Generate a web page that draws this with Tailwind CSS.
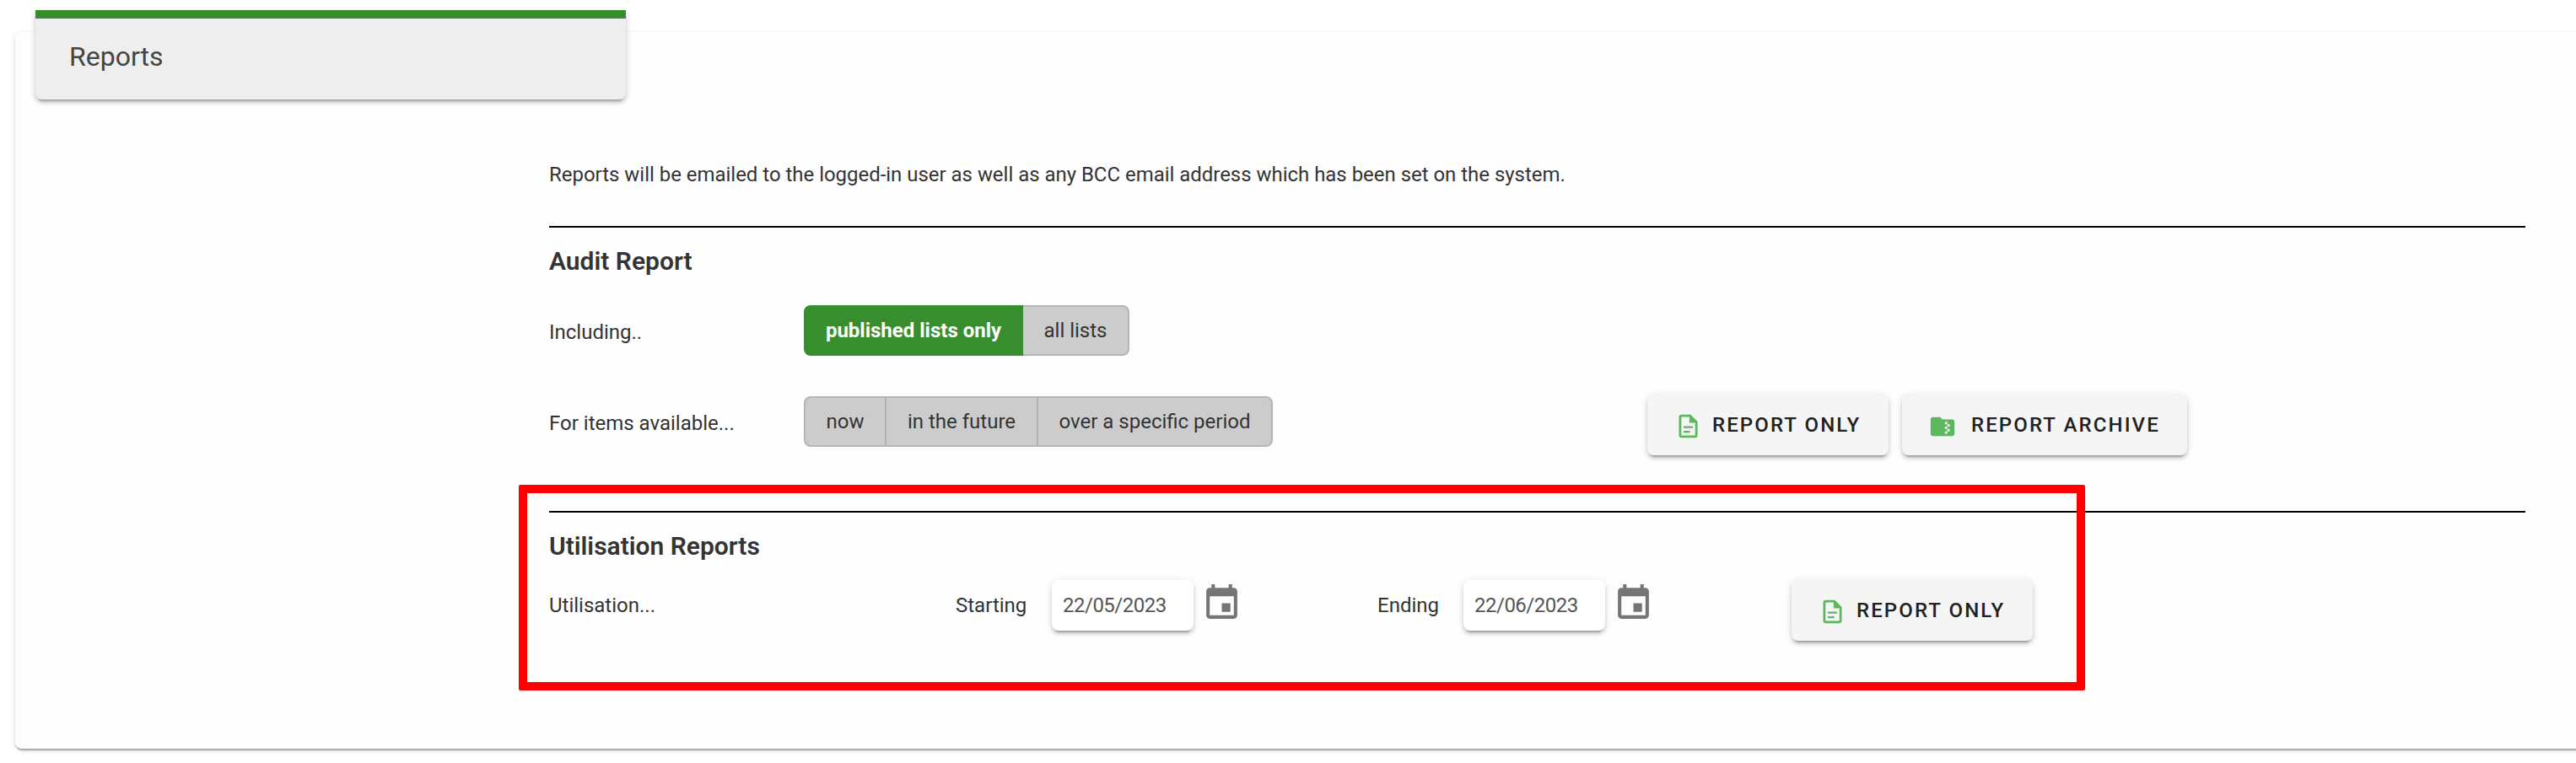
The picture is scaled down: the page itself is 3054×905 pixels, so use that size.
<!DOCTYPE html>
<html>
<head>
<meta charset="utf-8">
<script src="https://cdn.jsdelivr.net/npm/@tailwindcss/browser@4"></script>
</head>
<body class="bg-white font-['Roboto',sans-serif] text-[#212121] overflow-hidden">
<div class="relative w-[3054px] h-[905px] pt-[38px] pl-[18px] overflow-hidden">
  <div class="flow-root w-[3060px] h-[850px] rounded-[8px] bg-[#fefefe] shadow-[0_4px_2px_-2px_rgba(0,0,0,0.2),0_2px_2px_0_rgba(0,0,0,0.14),0_2px_6px_0_rgba(0,0,0,0.12)]">
    <div class="ml-[24px] -mt-[26px] w-[700px] h-[106px] border-t-[10px] border-[#388e2f] bg-[#eeeeee] rounded-b-[8px] shadow-[0_6px_2px_-4px_rgba(0,0,0,0.2),0_4px_4px_0_rgba(0,0,0,0.14),0_2px_10px_0_rgba(0,0,0,0.12)] pl-[40px] pt-[25px] text-[32px] leading-[40px] text-[#444444]">Reports</div>
    <div class="ml-[633px] w-[2343px]">
      <p class="pt-[73px] text-[23.95px] leading-[32px] text-[#333333]">Reports will be emailed to the logged-in user as well as any BCC email address which has been set on the system.</p>
      <hr class="mt-[45px] border-t-2 border-black">
      <h2 class="mt-[21px] text-[30px] leading-[38px] font-semibold text-[#333333]">Audit Report</h2>
      <div class="mt-[33px] flex items-center h-[60px]">
        <span class="w-[302px] pt-[4px] text-[24px] text-[#333333]">Including..</span>
        <div class="flex h-[60px] text-[24px]">
          <span class="flex items-center w-[260px] justify-center rounded-l-[8px] bg-[#388e2f] font-bold text-white">published lists only</span>
          <span class="flex items-center w-[126px] justify-center rounded-r-[8px] bg-[#cccccc] border-2 border-l-0 border-[#b5b5b5] text-[#333333]">all lists</span>
        </div>
      </div>
      <div class="mt-[45px] flex items-start h-[73px]">
        <span class="w-[302px] h-[70px] flex items-center text-[24px] text-[#333333]">For items available...</span>
        <div class="flex h-[60px] mt-[3px] w-[556px] text-[24px] text-[#333333] rounded-[8px] bg-[#cccccc] border-2 border-[#b5b5b5]">
          <span class="flex items-center justify-center w-[96px] border-r-2 border-[#b5b5b5]">now</span>
          <span class="flex items-center justify-center w-[180px] border-r-2 border-[#b5b5b5]">in the future</span>
          <span class="flex items-center justify-center flex-1">over a specific period</span>
        </div>
        <button class="ml-[444px] flex items-center w-[286px] h-[73px] pl-[32px] rounded-[8px] bg-[#f5f5f5] shadow-[0_6px_2px_-4px_rgba(0,0,0,0.2),0_4px_4px_0_rgba(0,0,0,0.14),0_2px_10px_0_rgba(0,0,0,0.12)] text-[24px] leading-none font-medium tracking-[2.1px] text-[#212121]">
          <svg class="w-[33px] h-[33px] mt-[4px] mr-[12px] fill-[#5cb85c]" viewBox="0 0 24 24"><path d="M8 12h8v1.7H8zm0 4h5.5v1.7H8zm6-14H6c-1.1 0-2 .9-2 2v16c0 1.1.89 2 1.99 2H18c1.1 0 2-.9 2-2V8l-6-6zm4 18H6V4h7v5h5v11z"/></svg>
          REPORT ONLY
        </button>
        <button class="ml-[16px] flex items-center w-[338px] h-[73px] pl-[31px] rounded-[8px] bg-[#f5f5f5] shadow-[0_6px_2px_-4px_rgba(0,0,0,0.2),0_4px_4px_0_rgba(0,0,0,0.14),0_2px_10px_0_rgba(0,0,0,0.12)] text-[24px] leading-none font-medium tracking-[2.1px] text-[#212121]">
          <svg class="w-[34px] h-[34px] mt-[4px] mr-[17px] fill-[#5cb85c]" viewBox="0 0 24 24"><path d="M20,6h-8l-2-2H4C2.9,4,2.01,4.9,2.01,6L2,18c0,1.1,0.9,2,2,2h16c1.1,0,2-0.9,2-2V8C22,6.9,21.1,6,20,6z M18,12h-2v2h2v2h-2v2h-2v-2h2v-2h-2v-2h2v-2h-2V8h2v2h2V12z"/></svg>
          REPORT ARCHIVE
        </button>
      </div>
      <hr class="mt-[66px] border-t-2 border-black">
      <h2 class="mt-[21px] text-[30px] leading-[38px] font-semibold text-[#333333]">Utilisation Reports</h2>
      <div class="mt-[21px] flex items-start h-[73px] text-[24px] text-[#333333]">
        <span class="w-[482px] h-[60px] flex items-center">Utilisation...</span>
        <span class="w-[114px] h-[60px] flex items-center">Starting</span>
        <div class="w-[168px] h-[60px] pl-[13px] flex items-center rounded-[8px] bg-white shadow-[0_6px_2px_-4px_rgba(0,0,0,0.2),0_4px_4px_0_rgba(0,0,0,0.14),0_2px_10px_0_rgba(0,0,0,0.12)] tracking-[-0.5px] text-[#555555]">22/05/2023</div>
        <svg class="w-[49px] h-[49px] mt-[3px] ml-[9px] fill-[#757575]" viewBox="0 0 24 24"><path d="M17 12h-5v5h5v-5zM16 1v2H8V1H6v2H5c-1.11 0-1.99.9-1.99 2L3 19c0 1.1.89 2 2 2h14c1.1 0 2-.9 2-2V5c0-1.1-.9-2-2-2h-1V1h-2zm3 18H5V8h14v11z"/></svg>
        <span class="ml-[160px] w-[102px] h-[60px] flex items-center">Ending</span>
        <div class="w-[168px] h-[60px] pl-[13px] flex items-center rounded-[8px] bg-white shadow-[0_6px_2px_-4px_rgba(0,0,0,0.2),0_4px_4px_0_rgba(0,0,0,0.14),0_2px_10px_0_rgba(0,0,0,0.12)] tracking-[-0.5px] text-[#555555]">22/06/2023</div>
        <svg class="w-[49px] h-[49px] mt-[3px] ml-[9px] fill-[#757575]" viewBox="0 0 24 24"><path d="M17 12h-5v5h5v-5zM16 1v2H8V1H6v2H5c-1.11 0-1.99.9-1.99 2L3 19c0 1.1.89 2 2 2h14c1.1 0 2-.9 2-2V5c0-1.1-.9-2-2-2h-1V1h-2zm3 18H5V8h14v11z"/></svg>
        <button class="ml-[163px] -mt-[1px] flex items-center w-[286px] h-[73px] pl-[32px] rounded-[8px] bg-[#f5f5f5] shadow-[0_6px_2px_-4px_rgba(0,0,0,0.2),0_4px_4px_0_rgba(0,0,0,0.14),0_2px_10px_0_rgba(0,0,0,0.12)] text-[24px] leading-none font-medium tracking-[2.1px] text-[#212121]">
          <svg class="w-[33px] h-[33px] mt-[4px] mr-[12px] fill-[#5cb85c]" viewBox="0 0 24 24"><path d="M8 12h8v1.7H8zm0 4h5.5v1.7H8zm6-14H6c-1.1 0-2 .9-2 2v16c0 1.1.89 2 1.99 2H18c1.1 0 2-.9 2-2V8l-6-6zm4 18H6V4h7v5h5v11z"/></svg>
          REPORT ONLY
        </button>
      </div>
    </div>
  </div>
  <div class="absolute left-[615px] top-[575px] w-[1857px] h-[244px] border-[10px] border-[#ff0000] rounded-[2px]"></div>
</div>
</body>
</html>
